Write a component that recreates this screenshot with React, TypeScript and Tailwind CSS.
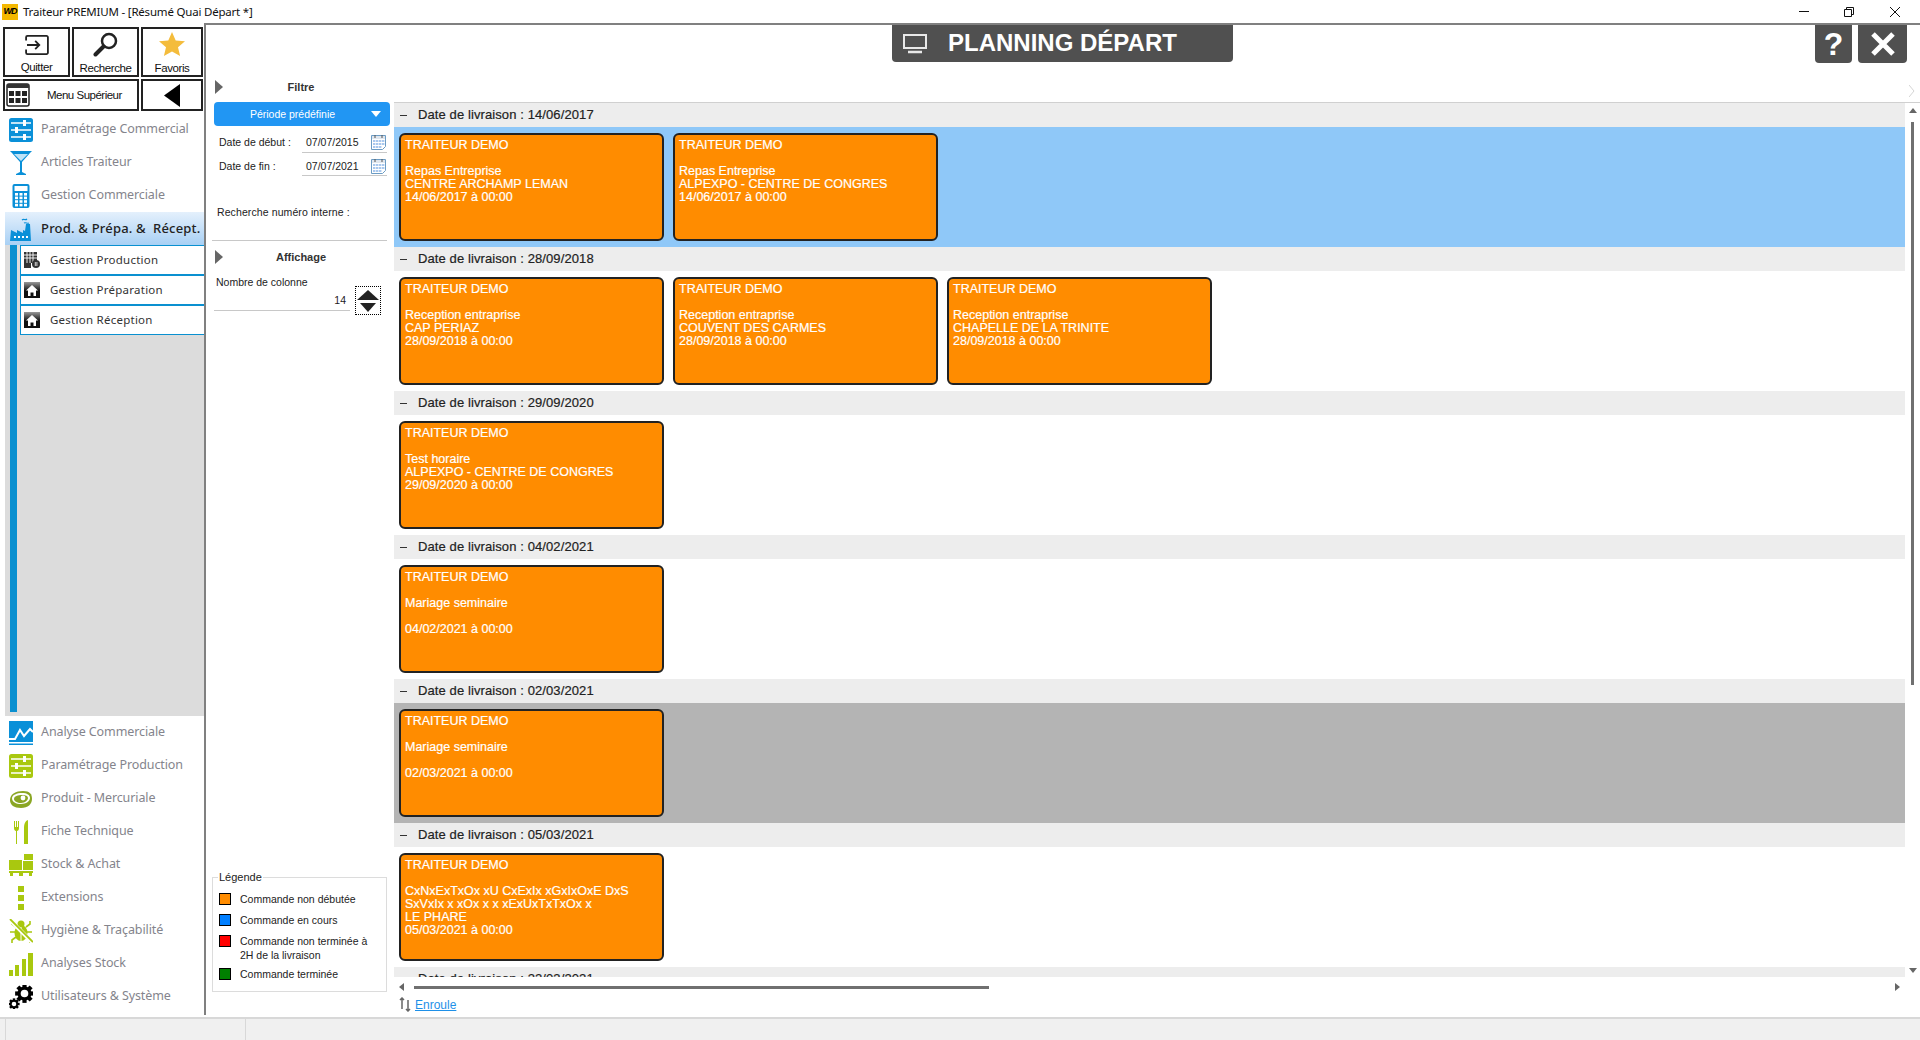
import type { ReactNode } from "react";

const BLUE = "#0a90d8";
const GREEN = "#a9c80f";

type IconProps = { color?: string };

function Sliders({ color = BLUE }: IconProps) {
  return (
    <svg width="24" height="24" viewBox="0 0 24 24">
      <rect width="24" height="24" rx="2.5" fill={color} />
      <g stroke="#fff" strokeWidth="1.4">
        <path d="M2 5h20M2 12h20M2 19h20" />
      </g>
      <g fill="#fff">
        <rect x="14" y="2" width="3" height="6" />
        <rect x="6" y="9" width="3" height="6" />
        <rect x="14" y="16" width="3" height="6" />
      </g>
    </svg>
  );
}

function Glass() {
  return (
    <svg width="24" height="24" viewBox="0 0 24 24" fill={BLUE}>
      <path d="M1 0h22l-2 2L13 11v10l4 2v1H7v-1l4-2V11L3 2z" />
      <path d="M5 3h14l-7 7z" fill="#bfe3f7" />
    </svg>
  );
}

function Calculator() {
  const keys = [0, 1, 2, 3].flatMap((r) => [0, 1, 2].map((c) => [c, r]));
  return (
    <svg width="24" height="24" viewBox="0 0 24 24">
      <rect x="3.5" y="0" width="17" height="24" rx="2" fill={BLUE} />
      <rect x="5.5" y="2" width="13" height="5" fill="#fff" />
      {keys.map(([c, r]) => (
        <rect key={`${c}-${r}`} x={6 + c * 4.5} y={9 + r * 3.6} width="3" height="2.6" fill="#fff" />
      ))}
    </svg>
  );
}

function Factory() {
  return (
    <svg width="24" height="24" viewBox="0 0 24 24" fill={BLUE}>
      <path d="M1 24l1-11 6 3v-3l6 3v-3l2 1 1-7h4l1 17z" />
      <path d="M13 3c2-2 3 1 5-1M15 6c2-1 3 1 5 0" stroke={BLUE} strokeWidth="1.2" fill="none" />
      <path d="M5 19h2v2H5zM9 19h2v2H9zM13 19h2v2h-2zM17 19h2v2h-2z" fill="#fff" />
    </svg>
  );
}

function Chart() {
  return (
    <svg width="24" height="24" viewBox="0 0 24 24">
      <rect width="24" height="24" fill={BLUE} />
      <path d="M0 18h6l5-9 4 6 6-7 3 3" stroke="#fff" strokeWidth="2" fill="none" />
      <rect y="21" width="24" height="1.5" fill="#fff" />
    </svg>
  );
}

function Steak() {
  return (
    <svg width="24" height="24" viewBox="0 0 24 24">
      <path d="M1 13C1 7 7 4 14 4s9 3 9 8-4 9-11 9-11-3-11-8z" fill="#8aa624" />
      <path d="M3 11c0-3 5-5 10-5s8 2 8 5-4 6-9 6-9-2-9-6z" fill="#fff" />
      <path d="M5 12c0-3 4-4 8-4s6 1 6 3-3 5-7 5-7-2-7-4z" fill="#8aa624" />
      <circle cx="14" cy="11" r="2.4" fill="#fff" />
    </svg>
  );
}

function Cutlery() {
  return (
    <svg width="24" height="24" viewBox="0 0 24 24" fill={GREEN}>
      <path d="M5 1h1v6h1V1h1v6h1V1h1v7c0 2-1 3-2 3v13H7V11c-1 0-2-1-2-3z" />
      <path d="M15 24V8c0-4 1-7 4-8v24z" />
    </svg>
  );
}

function Boxes() {
  return (
    <svg width="24" height="24" viewBox="0 0 24 24" fill={GREEN}>
      <rect x="15" y="1" width="9" height="6" />
      <rect x="0" y="7" width="13" height="10" />
      <rect x="14" y="8" width="10" height="9" />
      <rect x="0" y="18" width="24" height="2" />
      <path d="M1 20h3v3H1zM10 20h4v3h-4zM20 20h3v3h-3z" />
    </svg>
  );
}

function Dots() {
  return (
    <svg width="24" height="24" viewBox="0 0 24 24" fill={GREEN}>
      <rect x="9" y="0" width="6" height="6" />
      <rect x="9" y="9" width="6" height="6" />
      <rect x="9" y="18" width="6" height="6" />
    </svg>
  );
}

function Bug() {
  return (
    <svg width="24" height="24" viewBox="0 0 24 24">
      <g stroke={GREEN} strokeWidth="1.6" fill="none">
        <path d="M7 8L3 5V2M17 8l4-3V2M6 13H1M18 13h5M7 18l-4 3v3M17 18l4 3v3" />
      </g>
      <ellipse cx="12" cy="14" rx="6.5" ry="8" fill={GREEN} />
      <circle cx="12" cy="5" r="3.5" fill={GREEN} />
      <path d="M12 8v14" stroke="#fff" strokeWidth="1" />
      <path d="M0 0l24 24" stroke="#fff" strokeWidth="4" />
      <path d="M1 0l23 23" stroke={GREEN} strokeWidth="1.8" />
    </svg>
  );
}

function Bars() {
  return (
    <svg width="24" height="24" viewBox="0 0 24 24" fill={GREEN}>
      <rect x="0" y="18" width="4" height="6" />
      <rect x="6" y="13" width="4" height="11" />
      <rect x="13" y="7" width="4" height="17" />
      <rect x="19" y="1" width="5" height="23" />
    </svg>
  );
}

function Gear({ cx, cy, r }: { cx: number; cy: number; r: number }) {
  const teeth = [0, 45, 90, 135, 180, 225, 270, 315];
  return (
    <g>
      {teeth.map((a) => (
        <rect
          key={a}
          x={cx - r * 0.28}
          y={cy - r * 1.25}
          width={r * 0.56}
          height={r * 0.5}
          fill="#000"
          transform={`rotate(${a} ${cx} ${cy})`}
        />
      ))}
      <circle cx={cx} cy={cy} r={r * 0.72} fill="none" stroke="#000" strokeWidth={r * 0.42} />
    </g>
  );
}

function Gears() {
  return (
    <svg width="24" height="24" viewBox="0 0 24 24">
      <Gear cx={15.5} cy={8.5} r={7.5} />
      <Gear cx={5} cy={19} r={4.5} />
    </svg>
  );
}

function GridBadge() {
  return (
    <svg width="16" height="16" viewBox="0 0 16 16">
      <rect x="0" y="0" width="13" height="11" fill="#333" />
      <path d="M3 0v11M6 0v11M9 0v11M0 3h13M0 6h13" stroke="#fff" strokeWidth="0.9" />
      <rect x="0" y="11" width="7" height="5" fill="#333" />
      <circle cx="12" cy="12" r="4" fill="#333" />
      <path d="M11.3 10v4M12.9 10v4" stroke="#fff" strokeWidth="0.8" />
    </svg>
  );
}

function House() {
  return (
    <svg width="16" height="16" viewBox="0 0 16 16">
      <defs>
        <linearGradient id="house-bg" x1="0" y1="0" x2="0" y2="1">
          <stop offset="0" stopColor="#999" />
          <stop offset="0.55" stopColor="#111" />
        </linearGradient>
      </defs>
      <rect width="16" height="16" fill="url(#house-bg)" />
      <path d="M8 3l6 5.5h-2V14H9.5v-3.5h-3V14H4V8.5H2z" fill="#fff" />
    </svg>
  );
}

function Arrow({ dir }: { dir: "up" | "down" | "left" | "right" }) {
  const d = {
    up: "M0 5L4 0l4 5z",
    down: "M0 0h8L4 5z",
    left: "M5 0v8L0 4z",
    right: "M0 0l5 4-5 4z",
  }[dir];
  return (
    <svg width={dir === "up" || dir === "down" ? 8 : 5} height={dir === "up" || dir === "down" ? 5 : 8} className="shrink-0">
      <path d={d} fill="#666" />
    </svg>
  );
}

function CalendarIcon() {
  return (
    <svg width="15" height="16" viewBox="0 0 15 16" className="shrink-0">
      <path d="M.5 1.5h14v11l-3 3H.5z" fill="#fff" stroke="#6c9cc4" />
      <rect x="1" y="2" width="13" height="3" fill="#dfe6ee" />
      <path d="M4 1v3M11 1v3" stroke="#555" />
      <g fill="#a9c8ee">
        <rect x="2" y="6" width="2.4" height="2" />
        <rect x="5" y="6" width="2.4" height="2" />
        <rect x="8" y="6" width="2.4" height="2" />
        <rect x="11" y="6" width="2.4" height="2" />
        <rect x="2" y="9" width="2.4" height="2" />
        <rect x="5" y="9" width="2.4" height="2" />
        <rect x="8" y="9" width="2.4" height="2" />
        <rect x="11" y="9" width="2.4" height="2" />
        <rect x="2" y="12" width="2.4" height="2" />
        <rect x="5" y="12" width="2.4" height="2" />
        <rect x="8" y="12" width="2.4" height="2" />
      </g>
    </svg>
  );
}

const topItems: { label: string; icon: ReactNode }[] = [
  { label: "Paramétrage Commercial", icon: <Sliders /> },
  { label: "Articles Traiteur", icon: <Glass /> },
  { label: "Gestion Commerciale", icon: <Calculator /> },
];

const subItems: { label: string; icon: ReactNode }[] = [
  { label: "Gestion Production", icon: <GridBadge /> },
  { label: "Gestion Préparation", icon: <House /> },
  { label: "Gestion Réception", icon: <House /> },
];

const bottomItems: { label: string; icon: ReactNode }[] = [
  { label: "Analyse Commerciale", icon: <Chart /> },
  { label: "Paramétrage Production", icon: <Sliders color={GREEN} /> },
  { label: "Produit - Mercuriale", icon: <Steak /> },
  { label: "Fiche Technique", icon: <Cutlery /> },
  { label: "Stock & Achat", icon: <Boxes /> },
  { label: "Extensions", icon: <Dots /> },
  { label: "Hygiène & Traçabilité", icon: <Bug /> },
  { label: "Analyses Stock", icon: <Bars /> },
  { label: "Utilisateurs & Système", icon: <Gears /> },
];

type Card = string[];

const sections: { date: string; bg: string; cards: Card[] }[] = [
  {
    date: "14/06/2017",
    bg: "bg-[#8fc8f8]",
    cards: [
      ["Repas Entreprise", "CENTRE ARCHAMP LEMAN", "14/06/2017 à 00:00"],
      ["Repas Entreprise", "ALPEXPO - CENTRE DE CONGRES", "14/06/2017 à 00:00"],
    ],
  },
  {
    date: "28/09/2018",
    bg: "bg-white",
    cards: [
      ["Reception entraprise", "CAP PERIAZ", "28/09/2018 à 00:00"],
      ["Reception entraprise", "COUVENT DES CARMES", "28/09/2018 à 00:00"],
      ["Reception entraprise", "CHAPELLE DE LA TRINITE", "28/09/2018 à 00:00"],
    ],
  },
  {
    date: "29/09/2020",
    bg: "bg-white",
    cards: [["Test horaire", "ALPEXPO - CENTRE DE CONGRES", "29/09/2020 à 00:00"]],
  },
  {
    date: "04/02/2021",
    bg: "bg-white",
    cards: [["Mariage seminaire", "\u00a0", "04/02/2021 à 00:00"]],
  },
  {
    date: "02/03/2021",
    bg: "bg-[#b4b4b4]",
    cards: [["Mariage seminaire", "\u00a0", "02/03/2021 à 00:00"]],
  },
  {
    date: "05/03/2021",
    bg: "bg-white",
    cards: [["CxNxExTxOx xU CxExIx xGxIxOxE DxS", "SxVxIx x xOx x x xExUxTxTxOx x", "LE PHARE", "05/03/2021 à 00:00"]],
  },
  { date: "22/03/2021", bg: "bg-white", cards: [] },
];

const legend: { color: string; pb: string; lines: string[] }[] = [
  { color: "bg-[#ff8c00]", pb: "pb-[7px]", lines: ["Commande non débutée"] },
  { color: "bg-[#007fff]", pb: "pb-[7px]", lines: ["Commande en cours"] },
  { color: "bg-[#ff0000]", pb: "pb-[5px]", lines: ["Commande non terminée à", "2H de la livraison"] },
  { color: "bg-[#008000]", pb: "pb-[7px]", lines: ["Commande terminée"] },
];

function NavRow({ label, icon }: { label: string; icon: ReactNode }) {
  return (
    <div className="flex h-[33px] items-center gap-[8px] pl-[9px] font-['Noto_Sans',sans-serif] text-[12.5px] text-[#84848c]">
      <span className="flex h-[24px] w-[24px] shrink-0">{icon}</span>
      <span className="tracking-[-0.1px]">{label}</span>
    </div>
  );
}

function Sidebar() {
  return (
    <div className="flex h-[992px] w-[206px] shrink-0 flex-col border-r-2 border-[#808080] pt-[4px]">
      <div className="flex gap-[2px] pl-[3px] text-[11.5px] tracking-[-0.4px] text-[#111]">
        <div className="flex h-[50px] w-[67px] flex-col items-center border-2 border-[#222]">
          <svg width="24" height="20" viewBox="0 0 26 22" className="mt-[6px]" fill="none" stroke="#222" strokeWidth="2">
            <path d="M1 6V2.5A1.5 1.5 0 0 1 2.500 1h21A1.5 1.5 0 0 1 25 2.500v17a1.500 1.500 0 0 1-1.500 1.500h-21A1.500 1.500 0 0 1 1 19.500V16" />
            <path d="M2 11h13M11 6.500L15.500 11 11 15.500" />
          </svg>
          <span className="mt-[5px] leading-[14px]">Quitter</span>
        </div>
        <div className="flex h-[50px] w-[67px] flex-col items-center border-2 border-[#222]">
          <svg width="26" height="25" viewBox="0 0 26 25" className="mt-[3px]" fill="none" stroke="#222">
            <circle cx="16" cy="9" r="7" strokeWidth="2.500" />
            <path d="M10.500 14.500L2.500 22.500" strokeWidth="4" strokeLinecap="round" />
          </svg>
          <span className="mt-[4px] leading-[14px]">Recherche</span>
        </div>
        <div className="flex h-[50px] w-[62px] flex-col items-center border-2 border-[#222]">
          <svg width="26" height="24" viewBox="0 0 26 24" className="mt-[3px]">
            <path d="M13 0l3.700 8.500 9.300.8-7 6 2.100 8.700L13 19.400 4.900 24 7 15.300 0 9.300l9.300-.8z" fill="#f4bc3c" />
          </svg>
          <span className="mt-[5px] leading-[14px]">Favoris</span>
        </div>
      </div>
      <div className="mt-[2px] flex gap-[2px] pl-[3px]">
        <div className="flex h-[32px] w-[136px] items-center border-2 border-[#222] text-[11.5px] tracking-[-0.5px] text-[#111]">
          <svg width="24" height="24" viewBox="0 0 24 24" className="ml-[1px]">
            <rect x="1" y="1" width="22" height="22" rx="2" fill="#fff" stroke="#222" strokeWidth="1.500" />
            <rect x="1" y="1" width="22" height="4" fill="#333" />
            <g fill="#222">
              <rect x="3" y="8" width="5" height="5" />
              <rect x="9.500" y="8" width="5" height="5" />
              <rect x="16" y="8" width="5" height="5" />
              <rect x="3" y="15" width="5" height="5" />
              <rect x="9.500" y="15" width="5" height="5" />
              <rect x="16" y="15" width="5" height="5" />
            </g>
          </svg>
          <span className="mt-[1px] ml-[17px]">Menu Supérieur</span>
        </div>
        <div className="flex h-[32px] w-[62px] items-center justify-center border-2 border-[#222]">
          <svg width="16" height="23" viewBox="0 0 16 23">
            <path d="M16 0v23L0 11.500z" fill="#000" />
          </svg>
        </div>
      </div>
      <div className="mt-[2px]">
        {topItems.map((item) => (
          <NavRow key={item.label} {...item} />
        ))}
      </div>
      <div className="ml-[5px] flex h-[33px] items-center gap-[8px] bg-gradient-to-b from-[#e4f0fc] to-[#a8d0f4] pl-[4px] font-['Noto_Sans',sans-serif] text-[13px] font-medium tracking-[0.2px] whitespace-nowrap text-[#222]">
        <span className="flex h-[24px] w-[24px] shrink-0">
          <Factory />
        </span>
        Prod. &amp; Prépa. &amp;&nbsp; Récept.
      </div>
      <div className="ml-[5px] flex h-[471px] bg-[#dcdcdc] pl-[5px]">
        <div className="mb-[4px] w-[7px] bg-[#0a90d0]" />
        <div className="ml-[3px] flex-1">
          {subItems.map((item) => (
            <div
              key={item.label}
              className="flex h-[30px] items-center gap-[10px] border-y border-l border-[#0a90d0] bg-white pl-[3px] font-['Noto_Sans',sans-serif] text-[11.5px] tracking-[0.25px] text-[#333]"
            >
              {item.icon}
              <span>{item.label}</span>
            </div>
          ))}
        </div>
      </div>
      <div>
        {bottomItems.map((item) => (
          <NavRow key={item.label} {...item} />
        ))}
      </div>
    </div>
  );
}

function PanelTitle({ label }: { label: string }) {
  return (
    <div className="flex h-[14px] w-[173px] items-center pl-[9px]">
      <svg width="8" height="14" viewBox="0 0 8 14">
        <path d="M0 0l8 7-8 7z" fill="#666" />
      </svg>
      <span className="flex-1 text-center text-[11px] leading-[14px] font-bold text-[#333]">{label}</span>
    </div>
  );
}

function FilterPanel() {
  return (
    <div className="flex w-[188px] shrink-0 flex-col pb-[25px] text-[10.5px] leading-[14px] text-[#222]">
      <div className="mt-[55px]">
        <PanelTitle label="Filtre" />
      </div>
      <div className="mt-[8px] ml-[8px] flex h-[24px] w-[176px] items-center rounded-[4px] bg-[#2196f3] text-[10.5px] text-white">
        <span className="flex-1 text-center">Période prédéfinie</span>
        <svg width="10" height="6" viewBox="0 0 10 6" className="mr-[9px]">
          <path d="M0 0h10L5 6z" fill="#fff" />
        </svg>
      </div>
      <div className="mt-[7px] ml-[13px] flex h-[20px] items-center">
        <span className="w-[83px] pb-[2px]">Date de début :</span>
        <div className="flex h-[20px] w-[85px] items-center justify-between border-b border-[#c8c8c8] pr-[1px] pb-[2px] pl-[4px]">
          <span>07/07/2015</span>
          <CalendarIcon />
        </div>
      </div>
      <div className="mt-[3px] ml-[13px] flex h-[20px] items-center">
        <span className="w-[83px]">Date de fin :</span>
        <div className="flex h-[20px] w-[85px] items-center justify-between border-b border-[#c8c8c8] pr-[1px] pl-[4px]">
          <span>07/07/2021</span>
          <CalendarIcon />
        </div>
      </div>
      <div className="mt-[29px] ml-[11px] tracking-[0.1px]">Recherche numéro interne :</div>
      <div className="mt-[21px] ml-[6px] h-px w-[175px] shrink-0 bg-[#c8c8c8]" />
      <div className="mt-[9px]">
        <PanelTitle label="Affichage" />
      </div>
      <div className="ml-[8px] flex">
        <div className="w-[136px]">
          <div className="mt-[11px] ml-[2px]">Nombre de colonne</div>
          <div className="mt-[4px] flex h-[18px] items-center justify-end border-b border-[#c8c8c8] pr-[4px] pb-[3px]">14</div>
        </div>
        <div className="mt-[22px] ml-[5px] flex h-[29px] w-[26px] flex-col items-center justify-center gap-[3px] border border-dotted border-black">
          <svg width="22" height="10" viewBox="0 0 22 10">
            <path d="M0 10L11 0l11 10z" fill="#222" />
          </svg>
          <svg width="16" height="9" viewBox="0 0 16 9">
            <path d="M0 0h16L8 9z" fill="#222" />
          </svg>
        </div>
      </div>
      <fieldset className="mt-auto ml-[6px] w-[175px] border border-[#dcdcdc] pt-[8px] pb-[3px]">
        <legend className="ml-[5px] px-[1px] text-[11px] leading-[14px] text-[#222]">Légende</legend>
        {legend.map((item) => (
          <div key={item.color} className="flex pl-[6px]">
            <span className={`mt-[1px] h-[12px] w-[12px] shrink-0 border border-black ${item.color}`} />
            <div className={`ml-[9px] text-[10.5px] leading-[14px] ${item.pb}`}>
              {item.lines.map((line) => (
                <div key={line}>{line}</div>
              ))}
            </div>
          </div>
        ))}
      </fieldset>
    </div>
  );
}

function OrderCard({ lines }: { lines: Card }) {
  return (
    <div className="h-[108px] w-[265px] shrink-0 rounded-[6px] border-2 border-[#222] bg-[#ff8c00] pt-[4px] pl-[4px] text-[12.5px] leading-[13px] whitespace-nowrap text-white [-webkit-text-stroke:0.2px_#fff]">
      <div>TRAITEUR DEMO</div>
      <div>&nbsp;</div>
      {lines.map((line, i) => (
        <div key={i}>{line}</div>
      ))}
    </div>
  );
}

function Planner() {
  return (
    <div className="relative flex min-w-0 flex-1 flex-col">
      <div className="flex h-[77px] shrink-0 items-start">
        <div className="ml-[498px] flex h-[37px] w-[341px] items-center rounded-b-[4px] bg-[#505050] text-white">
          <svg width="24" height="20" viewBox="0 0 24 20" className="ml-[11px]" fill="none" stroke="#e8e8e8">
            <rect x="1" y="1" width="22" height="13" strokeWidth="2" />
            <path d="M5 18h14" strokeWidth="2.500" />
          </svg>
          <span className="ml-[21px] pb-[2px] font-['Liberation_Sans',sans-serif] text-[24px] leading-none font-bold">PLANNING DÉPART</span>
        </div>
        <div className="ml-[582px] flex h-[38px] w-[37px] items-center justify-center rounded-b-[4px] bg-[#505050] text-[32px] leading-none font-bold text-white">
          ?
        </div>
        <div className="ml-[6px] flex h-[38px] w-[49px] items-center justify-center rounded-b-[4px] bg-[#505050]">
          <svg width="26" height="26" viewBox="0 0 26 26">
            <path d="M3 3l20 20M23 3L3 23" stroke="#fff" strokeWidth="5" />
          </svg>
        </div>
      </div>
      <svg width="6" height="12" viewBox="0 0 6 12" className="absolute top-[60px] right-[5px]" fill="none" stroke="#d4d4d4">
        <path d="M0 0l5 6-5 6" />
      </svg>
      <div className="h-px shrink-0 bg-[#d0d0d0]" />
      <div className="flex h-[874px] shrink-0">
        <div className="w-[1511px] shrink-0 overflow-hidden">
          {sections.map((section) => (
            <div key={section.date}>
              <div className="flex h-[24px] items-center bg-[#ededed] text-[13px] tracking-[0.1px] text-[#222]">
                <span className="ml-[6px] h-px w-[7px] bg-[#333]" />
                <span className="ml-[11px] [-webkit-text-stroke:0.2px_#222]">Date de livraison : {section.date}</span>
              </div>
              <div className={`flex h-[120px] gap-[9px] pt-[6px] pl-[5px] ${section.bg}`}>
                {section.cards.map((lines, i) => (
                  <OrderCard key={i} lines={lines} />
                ))}
              </div>
            </div>
          ))}
        </div>
        <div className="flex w-[15px] flex-col items-center pt-[5px]">
          <Arrow dir="up" />
          <div className="mt-[9px] h-[563px] w-[3px] bg-[#707070]" />
          <div className="mt-auto mb-[4px]">
            <Arrow dir="down" />
          </div>
        </div>
      </div>
      <div className="flex h-[20px] w-[1511px] items-center pl-[5px]">
        <Arrow dir="left" />
        <div className="ml-[10px] h-[3px] w-[575px] bg-[#707070]" />
        <div className="mr-[5px] ml-auto">
          <Arrow dir="right" />
        </div>
      </div>
      <div className="flex h-[20px] items-center pb-[5px] pl-[5px]">
        <svg width="12" height="15" viewBox="0 0 12 15" fill="none" stroke="#666" strokeWidth="1.500">
          <path d="M3 12V1M1 3l2-2 2 2M9 3v11M7 12l2 2 2-2" />
        </svg>
        <span className="ml-[4px] text-[12px] leading-[14px] text-[#1e90e8] underline">Enroule</span>
      </div>
    </div>
  );
}

export default function App() {
  return (
    <div className="flex h-[1040px] w-[1920px] flex-col overflow-hidden bg-white font-['Liberation_Sans',sans-serif]">
      <div className="flex h-[23px] shrink-0 items-center">
        <div className="ml-[2px] flex h-[16px] w-[16px] items-center justify-center bg-[#f4b800] text-[9px] font-bold tracking-[-1px] text-black italic">
          WD
        </div>
        <span className="ml-[5px] font-['Noto_Sans',sans-serif] text-[11.5px] tracking-[-0.2px] text-[#111]">Traiteur PREMIUM - [Résumé Quai Départ *]</span>
        <div className="ml-auto flex items-center">
          <svg width="10" height="1" className="mr-[35px]">
            <rect width="10" height="1" fill="#111" />
          </svg>
          <svg width="10" height="10" viewBox="0 0 10 10" className="mr-[36px]" fill="none" stroke="#111">
            <path d="M2.500 2.500V.5h7v7h-2M.5 2.500h7v7h-7z" />
          </svg>
          <svg width="10" height="10" viewBox="0 0 10 10" className="mr-[20px]" fill="none" stroke="#111">
            <path d="M0 0l10 10M10 0L0 10" />
          </svg>
        </div>
      </div>
      <div className="flex min-h-0 flex-1">
        <Sidebar />
        <div className="-ml-[2px] flex min-w-0 flex-1 border-t-2 border-[#808080] pl-[2px]">
          <FilterPanel />
          <Planner />
        </div>
      </div>
      <div className="flex h-[23px] shrink-0 border-t-2 border-[#d8d8d8] bg-[#f0f0f0]">
        <div className="ml-[5px] w-[241px] border-x border-[#d8d8d8]" />
      </div>
    </div>
  );
}
